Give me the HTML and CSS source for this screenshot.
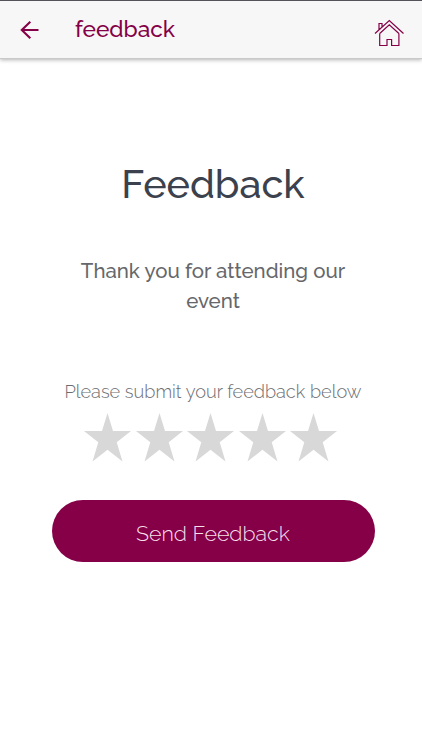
FILE: index.html
```html
<!DOCTYPE html>
<html lang="en">
<head>
<meta charset="utf-8">
<meta name="viewport" content="width=device-width, initial-scale=1">
<title>Feedback</title>
<link rel="stylesheet" href="styles.css">
</head>
<body>
<header class="bar">
  <svg class="back" viewBox="0 0 20 20"><path d="M18.5 10H2M10.3 1.8 1.8 10l8.5 8.2"/></svg>
  <span class="bar-title">feedback</span>
  <svg class="home" viewBox="0 0 30 28"><path d="M1 14.5 15.3 1.5 29.5 14.5M5 10.5V4.5h3v3.5M5.7 14.5v12h7.3v-6h4.6v6h7.3v-12M5.7 14.5 15.3 5.8l9.6 8.7"/></svg>
</header>
<main class="content">
  <h1 class="title">Feedback</h1>
  <p class="thanks">Thank you for attending our<br>event</p>
  <p class="prompt">Please submit your feedback below</p>
  <div class="stars">
    <svg class="star" viewBox="0 0 47 49"><path d="M23.5 0 29 18H47L32.7 29.2 38.5 48.5 23.5 36.7 8.5 48.5 14.3 29.2 0 18H18Z"/></svg>
    <svg class="star" viewBox="0 0 47 49"><path d="M23.5 0 29 18H47L32.7 29.2 38.5 48.5 23.5 36.7 8.5 48.5 14.3 29.2 0 18H18Z"/></svg>
    <svg class="star" viewBox="0 0 47 49"><path d="M23.5 0 29 18H47L32.7 29.2 38.5 48.5 23.5 36.7 8.5 48.5 14.3 29.2 0 18H18Z"/></svg>
    <svg class="star" viewBox="0 0 47 49"><path d="M23.5 0 29 18H47L32.7 29.2 38.5 48.5 23.5 36.7 8.5 48.5 14.3 29.2 0 18H18Z"/></svg>
    <svg class="star" viewBox="0 0 47 49"><path d="M23.5 0 29 18H47L32.7 29.2 38.5 48.5 23.5 36.7 8.5 48.5 14.3 29.2 0 18H18Z"/></svg>
  </div>
  <button class="send">Send Feedback</button>
</main>
</body>
</html>
```
FILE: styles.css
```css
* { box-sizing: border-box; }
body {
  margin: 0;
  background: #fff;
  font-family: Raleway, Lato, sans-serif;
}
.bar {
  display: flex;
  height: 59px;
  padding: 0 18px 0 20px;
  background: #f7f7f7;
  border-top: 1px solid #55535a;
  border-bottom: 1px solid #c9c9c9;
  box-shadow: 0 1px 4px rgba(0, 0, 0, .3);
  color: #850047;
}
.back, .home { fill: none; stroke: currentColor; }
.back { width: 20px; height: 20px; margin-top: 19px; stroke-width: 2.1; }
.bar-title {
  margin: 13px 0 0 35px;
  font-size: 22.7px;
  font-weight: 500;
  line-height: 30px;
}
.home { width: 30px; height: 28px; margin: 18px 0 0 auto; stroke-width: 1.2; }
.content {
  display: flex;
  flex-direction: column;
  align-items: center;
  padding-left: 4px;
}
.title {
  margin: 100px 0 0;
  color: #3b414d;
  font-size: 39.6px;
  font-weight: 500;
  line-height: 50px;
}
.thanks {
  margin: 47px 0 0;
  color: #66676b;
  font-size: 20.45px;
  font-weight: 500;
  line-height: 30px;
  text-align: center;
}
.prompt {
  margin: 64px 0 0;
  color: #6c6d71;
  font-size: 18.2px;
  font-weight: 300;
  line-height: 24px;
}
.stars { display: flex; gap: 4.6px; margin: 9px 4.4px 0 0; }
.star { width: 47px; height: 49px; fill: #d8d8d8; }
.send {
  width: 323px;
  height: 62px;
  margin-top: 38px;
  padding: 6px 0 0;
  border: 0;
  border-radius: 31px;
  background: #850047;
  color: #f6dfeb;
  font: 300 21.4px/28px Raleway, Lato, sans-serif;
}
```
